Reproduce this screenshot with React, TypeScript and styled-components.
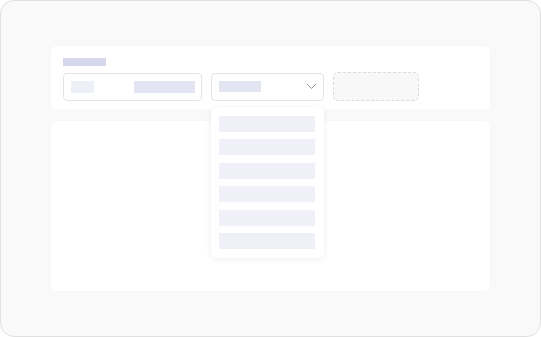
import React from 'react';
import styled, { createGlobalStyle } from 'styled-components';

const GlobalStyle = createGlobalStyle`
  html, body {
    margin: 0;
    padding: 0;
    background: #ffffff;
    font-family: "Inter", "Liberation Sans", sans-serif;
  }
`;

const Frame = styled.div`
  box-sizing: border-box;
  width: 541px;
  height: 337px;
  border: 1px solid #e0e0e0;
  border-radius: 14px;
  background: #f9f9f9;
  padding: 45px 50px 0 50px;
  display: flex;
  flex-direction: column;
  gap: 11px;
`;

const Card = styled.div<{ $height: number }>`
  box-sizing: border-box;
  height: ${p => p.$height}px;
  background: #ffffff;
  border-radius: 5px;
  box-shadow: 0 0 2px rgba(0, 0, 0, 0.03);
`;

const FilterCard = styled(Card)`
  padding: 12px 11px 0 12px;
  display: flex;
  flex-direction: column;
  gap: 6px;
`;

const Bar = styled.div<{ $w: number; $h?: number; $tone?: string }>`
  width: ${p => p.$w}px;
  height: ${p => p.$h ?? 12}px;
  background: ${p => p.$tone ?? '#e3e5f2'};
  flex: none;
`;

const Row = styled.div`
  display: flex;
  align-items: center;
  gap: 9px;
`;

const Field = styled.div<{ $w: number }>`
  box-sizing: border-box;
  width: ${p => p.$w}px;
  height: 28px;
  border: 1px solid #e4e4e4;
  border-radius: 4px;
  background: #fff;
  display: flex;
  align-items: center;
  padding: 0 6px 0 7px;
  justify-content: space-between;
  position: relative;
`;

const Placeholder = styled.div`
  box-sizing: border-box;
  width: 86px;
  height: 29px;
  border: 1px dashed #dcdcdc;
  border-radius: 5px;
  background: #f8f8f8;
`;

const Menu = styled.div`
  position: absolute;
  left: -1px;
  top: calc(100% + 7px);
  width: 113px;
  box-sizing: border-box;
  padding: 9px 9px 9px 8px;
  background: #fff;
  border-radius: 5px;
  box-shadow: 0 1px 6px rgba(0, 0, 0, 0.07);
  display: flex;
  flex-direction: column;
  gap: 7.5px;
  z-index: 2;
`;

const MenuItem = styled.div`
  height: 16px;
  background: #f0f1f8;
`;

const Chevron = () => (
  <svg width="11" height="7" viewBox="0 0 11 7" fill="none">
    <path d="M1 1l4.5 4.5L10 1" stroke="#9a9a9a" strokeWidth="1" />
  </svg>
);

export default function App() {
  return (
    <>
      <GlobalStyle />
      <Frame>
        <FilterCard $height={64}>
          <Bar $w={43} $h={8} $tone="#d5d8ea" />
          <Row>
            <Field $w={139}>
              <Bar $w={23} $tone="#eef0f8" />
              <Bar $w={61} />
            </Field>
            <Field $w={113}>
              <Bar $w={42} $h={11} />
              <Chevron />
              <Menu>
                {[0, 1, 2, 3, 4, 5].map(i => (
                  <MenuItem key={i} />
                ))}
              </Menu>
            </Field>
            <Placeholder />
          </Row>
        </FilterCard>
        <Card $height={170} />
      </Frame>
    </>
  );
}
